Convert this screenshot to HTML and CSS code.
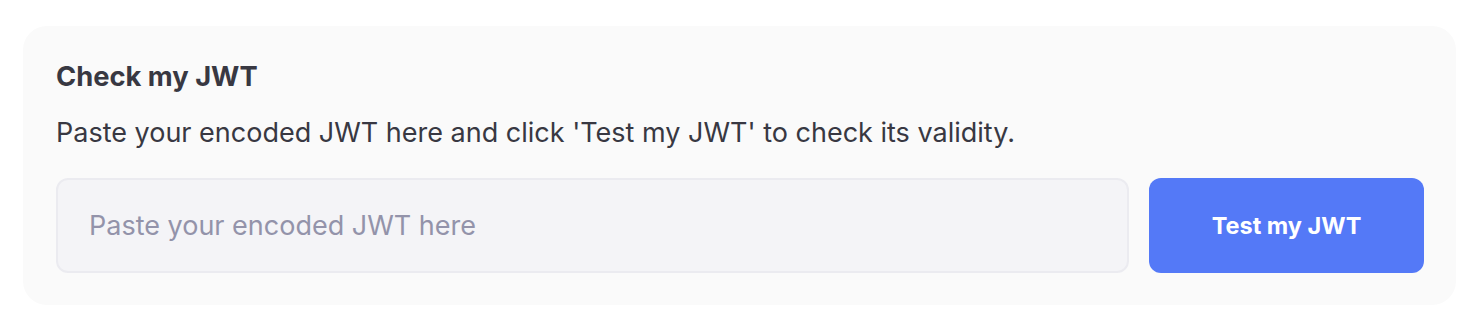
FILE: index.html
```html
<!DOCTYPE html>
<html lang="en">
<head>
<meta charset="utf-8">
<title>Check my JWT</title>
<link rel="stylesheet" href="styles.css">
</head>
<body>
<section class="card">
  <h2 class="title">Check my JWT</h2>
  <p class="desc">Paste your encoded JWT here and click 'Test my JWT' to check its validity.</p>
  <div class="row">
    <input class="field" type="text" placeholder="Paste your encoded JWT here">
    <button class="btn" type="button">Test my JWT</button>
  </div>
</section>
</body>
</html>
```
FILE: styles.css
```css
html, body {
  margin: 0;
  padding: 0;
  background: #ffffff;
}
body {
  padding: 26px 28px 0 23px;
  font-family: Inter, "Noto Sans", sans-serif;
  color: #383842;
}
.card {
  box-sizing: border-box;
  height: 279px;
  background: #fafafa;
  border-radius: 24px;
  padding: 33px 32px 32px 33px;
}
.title {
  margin: 0;
  font-size: 27.3px;
  line-height: 36px;
  font-weight: 700;
}
.desc {
  margin: 20px 0 0;
  font-size: 27px;
  line-height: 36px;
  font-weight: 400;
}
.row {
  display: flex;
  gap: 20px;
  margin-top: 27px;
}
.field {
  flex: 1;
  box-sizing: border-box;
  height: 95px;
  border: 2px solid #ebebf0;
  border-radius: 12px;
  background: #f4f4f7;
  padding: 0 31px;
  font-family: inherit;
  font-size: 27px;
  color: #383842;
  outline: none;
}
.field::placeholder {
  color: #9393aa;
}
.btn {
  width: 275px;
  height: 95px;
  border: none;
  border-radius: 12px;
  background: #5479f7;
  color: #ffffff;
  font-family: inherit;
  font-size: 23.5px;
  font-weight: 700;
  cursor: pointer;
}
```
